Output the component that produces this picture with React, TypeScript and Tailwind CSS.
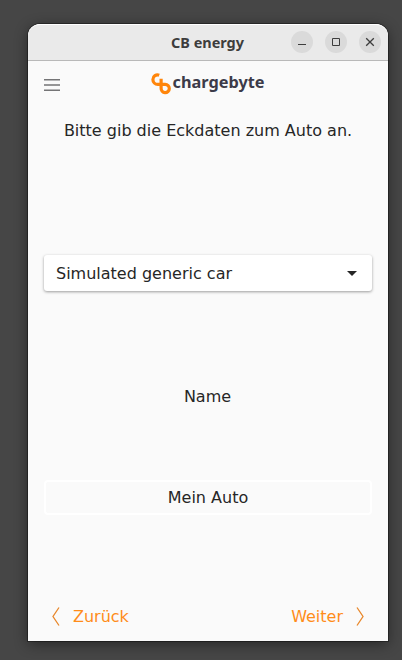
function Logo() {
  return (
    <div className="flex h-[24px] items-start">
      <svg width="22" height="24" viewBox="0 0 22 24" fill="none" stroke="#ff850a" strokeWidth="3.2">
        <path d="M8.2 3.2C5.2 2 1.9 4.2 1.9 7.4C1.9 10.2 4 12.4 6.8 12.4H14.2A4.1 4.1 0 1 1 10.1 16.2V6.8" />
      </svg>
      <svg width="94" height="24" className="overflow-visible">
        <text x="-0.5" y="16" textLength="92" lengthAdjust="spacingAndGlyphs" className="fill-[#3c3b49] font-['Noto_Sans',sans-serif] text-[16px] font-bold">chargebyte</text>
      </svg>
    </div>
  );
}

function TitleBar() {
  return (
    <header className="flex h-[37px] shrink-0 items-center rounded-t-[12px] border-t border-b border-t-white border-b-[#b9b9b9] bg-[#eaeaea] pr-[7px] pl-[143px]">
      <svg width="80" height="24" className="mt-px overflow-visible">
        <text x="0" y="17" textLength="73" lengthAdjust="spacingAndGlyphs" className="fill-[#3d3d3d] font-['Noto_Sans',sans-serif] text-[13.5px] font-bold">CB energy</text>
      </svg>
      <div className="mb-px ml-auto flex gap-3">
        <span className="size-[22px] rounded-full bg-[#dadada]">
          <svg width="22" height="22" stroke="#3d3d3d"><path d="M7 13.5h8" /></svg>
        </span>
        <span className="size-[22px] rounded-full bg-[#dadada]">
          <svg width="22" height="22" stroke="#3d3d3d" fill="none"><path d="M7.5 7.5h7v7h-7z" /></svg>
        </span>
        <span className="size-[22px] rounded-full bg-[#dadada]">
          <svg width="22" height="22" stroke="#3d3d3d" strokeWidth="1.3"><path d="M7.2 7.2l7.6 7.6M14.8 7.2l-7.6 7.6" /></svg>
        </span>
      </div>
    </header>
  );
}

export default function App() {
  return (
    <div className="h-[660px] w-[402px] overflow-hidden bg-[#464646] pt-6 pl-7 font-['DejaVu_Sans',sans-serif] text-[16px] leading-5 text-[#262626]">
      <div className="flex h-[617px] w-[360px] flex-col rounded-t-[12px] bg-[#fafafa] shadow-[0_0_0_1px_rgba(0,0,0,0.35),0_3px_14px_rgba(0,0,0,0.45)]">
        <TitleBar />
        <div className="flex h-[46px] shrink-0 items-start pt-[11px] pl-4">
          <svg width="16" height="16" className="mt-[6px]" fill="none" stroke="#747476" strokeWidth="1.5">
            <path d="M0 1.7h16M0 7h16M0 12.3h16" />
          </svg>
          <div className="ml-[91px]"><Logo /></div>
        </div>
        <main className="flex flex-1 flex-col px-4 text-center">
          <p className="mt-[14px] whitespace-nowrap">Bitte gib die Eckdaten zum Auto an.</p>
          <button className="mt-[114px] flex h-9 items-center justify-between rounded-[3px] bg-white pr-[15px] pl-3 shadow-[0_1px_3px_rgba(0,0,0,0.38)]">
            <span className="pt-px">Simulated generic car</span>
            <svg width="10" height="5" fill="#262626"><path d="M0 0h10L5 5z" /></svg>
          </button>
          <p className="mt-[96px] pr-px">Name</p>
          <div className="mt-[73px] flex h-[35px] items-center justify-center rounded-[4px] border-2 border-white">Mein Auto</div>
          <nav className="mt-auto mb-[14px] flex items-center justify-between pr-2 pl-2 text-[#ff8c19]">
            <span className="flex items-center gap-[13px]">
              <svg width="8" height="20" fill="none" stroke="#e8872a" strokeWidth="1.3"><path d="M7 0.5L1 9.5L7 18.5" /></svg>
              Zurück
            </span>
            <span className="flex items-center gap-[13px]">
              Weiter
              <svg width="8" height="20" fill="none" stroke="#e8872a" strokeWidth="1.3"><path d="M1 0.5L7 9.5L1 18.5" /></svg>
            </span>
          </nav>
        </main>
      </div>
    </div>
  );
}
